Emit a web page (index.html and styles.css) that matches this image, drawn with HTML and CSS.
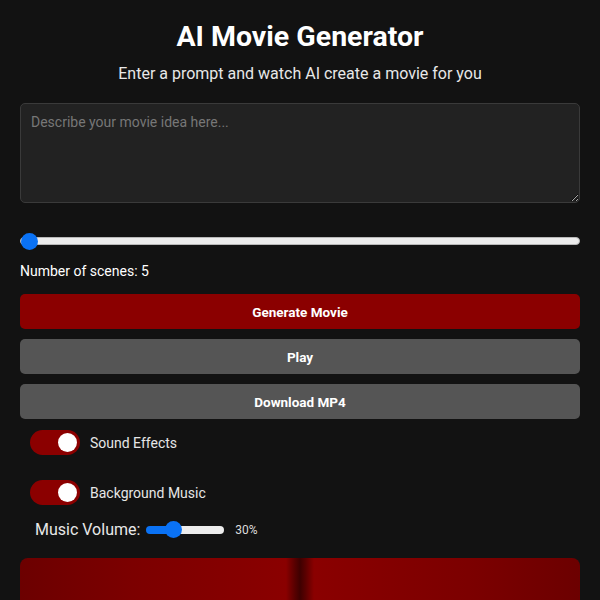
FILE: index.html
```html
<!DOCTYPE html>
<html lang="en">
<head>
<meta charset="utf-8">
<title>AI Movie Generator</title>
<link rel="stylesheet" href="styles.css">
</head>
<body>
<div class="app">
  <h1 class="title">AI Movie Generator</h1>
  <p class="subtitle">Enter a prompt and watch AI create a movie for you</p>
  <textarea class="prompt" placeholder="Describe your movie idea here..."></textarea>
  <input class="range scenes-range" type="range" min="5" max="20" value="5">
  <div class="scenes-label">Number of scenes: 5</div>
  <button class="btn btn-primary">Generate Movie</button>
  <button class="btn btn-secondary">Play</button>
  <button class="btn btn-secondary">Download MP4</button>
  <div class="toggles">
    <label class="toggle-row">
      <span class="switch"><span class="knob"></span></span>
      <span class="toggle-text">Sound Effects</span>
    </label>
    <label class="toggle-row">
      <span class="switch"><span class="knob"></span></span>
      <span class="toggle-text">Background Music</span>
    </label>
  </div>
  <div class="volume-row">
    <span class="volume-label">Music Volume:</span>
    <input class="range volume-range" type="range" min="0" max="100" value="30" style="background: linear-gradient(to right, #0a72f5 30%, #ececec 30%);">
    <span class="volume-value">30%</span>
  </div>
  <div class="screen">
    <div class="curtain curtain-left"></div>
    <div class="curtain curtain-right"></div>
  </div>
</div>
</body>
</html>
```
FILE: styles.css
```css
html, body {
  margin: 0;
  padding: 0;
  background: #121212;
}
body {
  font-family: Roboto, "Noto Sans", sans-serif;
  color: #ffffff;
}
.app {
  padding: 20px;
  display: flex;
  flex-direction: column;
}
.title {
  margin: 0;
  font-size: 28.5px;
  line-height: 34px;
  font-weight: 700;
  text-align: center;
}
.subtitle {
  margin: 10px 0 0;
  font-size: 16px;
  line-height: 19px;
  text-align: center;
  color: #e8e8e8;
}
.prompt {
  margin-top: 20px;
  box-sizing: border-box;
  width: 100%;
  height: 100px;
  padding: 10px;
  background: #222222;
  border: 1px solid #3a3a3a;
  border-radius: 5px;
  color: #ffffff;
  font-family: Roboto, sans-serif;
  font-size: 14px;
  line-height: 17px;
  display: block;
}
.prompt::placeholder {
  color: #777777;
}
.range {
  -webkit-appearance: none;
  appearance: none;
  margin: 0;
  height: 8px;
  border-radius: 4px;
  background: #ececec;
  border: 1px solid #b8b8b8;
  outline: none;
}
.range::-webkit-slider-thumb {
  -webkit-appearance: none;
  appearance: none;
  width: 17px;
  height: 17px;
  border-radius: 50%;
  background: #0a72f5;
  border: none;
}
.scenes-range {
  margin-top: 34px;
  width: 100%;
  box-sizing: border-box;
  display: block;
}
.scenes-label {
  margin-top: 18px;
  font-size: 14px;
  line-height: 17px;
}
.btn {
  display: block;
  width: 100%;
  height: 35px;
  border: none;
  border-radius: 5px;
  color: #ffffff;
  font-family: Roboto, sans-serif;
  font-size: 13.5px;
  font-weight: 700;
  margin-top: 10px;
}
.btn-primary {
  background: #8b0000;
  margin-top: 14px;
}
.btn-secondary {
  background: #555555;
}
.toggles {
  margin-top: 11px;
  padding-left: 10px;
  display: flex;
  flex-direction: column;
  gap: 25px;
}
.toggle-row {
  display: flex;
  align-items: center;
  gap: 10px;
}
.switch {
  position: relative;
  width: 50px;
  height: 25px;
  border-radius: 13px;
  background: #8b0000;
  flex: none;
}
.knob {
  position: absolute;
  top: 3px;
  right: 3px;
  width: 19px;
  height: 19px;
  border-radius: 50%;
  background: #ffffff;
}
.toggle-text {
  font-size: 14px;
  color: #e6e6e6;
}
.volume-row {
  margin-top: 15px;
  padding-left: 15px;
  display: flex;
  align-items: center;
}
.volume-label {
  font-size: 16px;
  line-height: 19px;
  color: #e8e8e8;
}
.volume-range {
  width: 78px;
  margin-left: 6px;
  border: none;
}
.volume-value {
  margin-left: 11px;
  font-size: 12px;
  color: #dddddd;
}
.screen {
  margin-top: 19px;
  height: 300px;
  border-radius: 8px;
  overflow: hidden;
  display: flex;
}
.curtain {
  flex: 1;
}
.curtain-left {
  background: linear-gradient(to right, #6c0000 0%, #7c0000 40%, #8a0000 95%, #5a0000 98%, #3e0000 100%);
}
.curtain-right {
  background: linear-gradient(to right, #3e0000 0%, #5a0000 2%, #8a0000 5%, #7c0000 60%, #6c0000 100%);
}
```
